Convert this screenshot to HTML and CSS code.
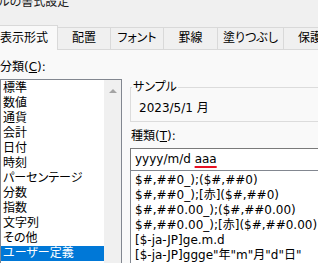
FILE: index.html
```html
<!DOCTYPE html>
<html lang="ja">

<head>
    <meta charset="UTF-8">
    <title>セルの書式設定</title>
    <link rel="stylesheet" href="styles.css">
</head>

<body>
    <div class="dialog">
        <div class="titlebar"><span class="title">セルの書式設定</span></div>
        <div class="tabs">
            <div class="tab active">表示形式</div>
            <div class="tab tab-align">配置</div>
            <div class="tab tab-font">フォント</div>
            <div class="tab tab-border">罫線</div>
            <div class="tab tab-fill">塗りつぶし</div>
            <div class="tab tab-protect">保護</div>
        </div>
        <div class="page">
            <div class="category">
                <div class="label">分類(<u>C</u>):</div>
                <div class="listbox">
                    <ul class="items">
                        <li>標準</li>
                        <li>数値</li>
                        <li>通貨</li>
                        <li>会計</li>
                        <li>日付</li>
                        <li>時刻</li>
                        <li>パーセンテージ</li>
                        <li>分数</li>
                        <li>指数</li>
                        <li>文字列</li>
                        <li>その他</li>
                        <li class="selected">ユーザー定義</li>
                    </ul>
                    <div class="scrollbar"><span class="arrow-up"></span></div>
                </div>
            </div>
            <div class="detail">
                <fieldset class="sample">
                    <legend>サンプル</legend>
                    <div class="sample-value">2023/5/1 月</div>
                </fieldset>
                <div class="label type-label">種類(<u>T</u>):</div>
                <div class="type-input">yyyy/m/d <span class="mark">aaa</span></div>
                <ul class="formats">
                    <li>$#,##0_);($#,##0)</li>
                    <li>$#,##0_);[赤]($#,##0)</li>
                    <li>$#,##0.00_);($#,##0.00)</li>
                    <li>$#,##0.00_);[赤]($#,##0.00)</li>
                    <li>[$-ja-JP]ge.m.d</li>
                    <li>[$-ja-JP]ggge"年"m"月"d"日"</li>
                </ul>
            </div>
        </div>
    </div>
</body>

</html>
```

FILE: styles.css
```css
* {
    margin: 0;
    padding: 0;
    box-sizing: border-box;
}

body {
    width: 318px;
    height: 263px;
    overflow: hidden;
    background-color: #f0f0f0;
    font-family: "DejaVu Sans", "Noto Sans CJK JP", sans-serif;
    font-size: 12px;
    font-feature-settings: "palt";
    color: #000;
}

.dialog {
    margin-left: -14px;
    width: 460px;
}

/* タイトル */
.titlebar {
    display: flex;
    align-items: flex-start;
    height: 25px;
    padding-left: 1px;
}

.title {
    line-height: 16px;
    margin-top: -6px;
    color: #1a1a1a;
}

/* タブ */
.tabs {
    display: flex;
    align-items: flex-end;
    height: 25px;
    border-bottom: 1px solid #d9d9d9;
}

.tab {
    height: 22px;
    line-height: 21px;
    border: 1px solid #d9d9d9;
    border-bottom: none;
    background-color: #f0f0f0;
    text-align: center;
    margin-left: -1px;
    white-space: nowrap;
}

.tab.active {
    width: 72px;
    height: 25px;
    margin-left: 0;
    margin-bottom: -1px;
    padding: 2px 0 0 13px;
    text-align: left;
    background-color: #f9f9f9;
}

.tab-align,
.tab-font {
    width: 54px;
}

.tab-border {
    width: 55px;
}

.tab-fill {
    width: 67px;
}

.tab-protect {
    width: 60px;
    padding-left: 14px;
    text-align: left;
}

/* ページ */
.page {
    display: flex;
    gap: 8px;
    height: 300px;
    padding: 9px 0 0 14px;
    background-color: #f9f9f9;
}

.label {
    line-height: 16px;
}

.category {
    width: 122px;
}

.listbox {
    display: flex;
    height: 200px;
    margin-top: 4px;
    border: 1px solid #828790;
    background-color: #fff;
}

.items {
    width: 103px;
    list-style: none;
    padding-top: 1px;
}

.items li {
    line-height: 15px;
    padding-left: 2px;
    white-space: nowrap;
}

.items li.selected {
    background-color: #0078d7;
    color: #fff;
}

.scrollbar {
    width: 17px;
    display: flex;
    justify-content: center;
    padding-top: 9px;
    background-color: #f0f0f0;
}

.arrow-up {
    width: 0;
    height: 0;
    border-left: 4px solid transparent;
    border-right: 4px solid transparent;
    border-bottom: 4px solid #a3a3a3;
}

/* 右側 */
.detail {
    flex: 1;
    padding-top: 20px;
}

.sample {
    border: 1px solid #dcdcdc;
    padding: 0 8px 5px;
}

.sample legend {
    line-height: 16px;
    padding: 0 1px;
    margin-left: -7px;
}

.sample-value {
    margin-top: 5px;
    line-height: 16px;
}

.type-label {
    margin-top: 6px;
    padding-left: 1px;
}

.type-input {
    height: 22px;
    margin-top: 4px;
    padding-left: 4px;
    line-height: 21px;
    border: 1px solid #7a7a7a;
    border-bottom: none;
    background-color: #fff;
    white-space: nowrap;
}

.mark {
    text-decoration: underline 2px #e81123;
    text-underline-offset: 3px;
}

.formats {
    height: 120px;
    padding: 2px 0 0 4px;
    list-style: none;
    border: 1px solid #828790;
    background-color: #fff;
}

.formats li {
    line-height: 15px;
    white-space: nowrap;
}
```
